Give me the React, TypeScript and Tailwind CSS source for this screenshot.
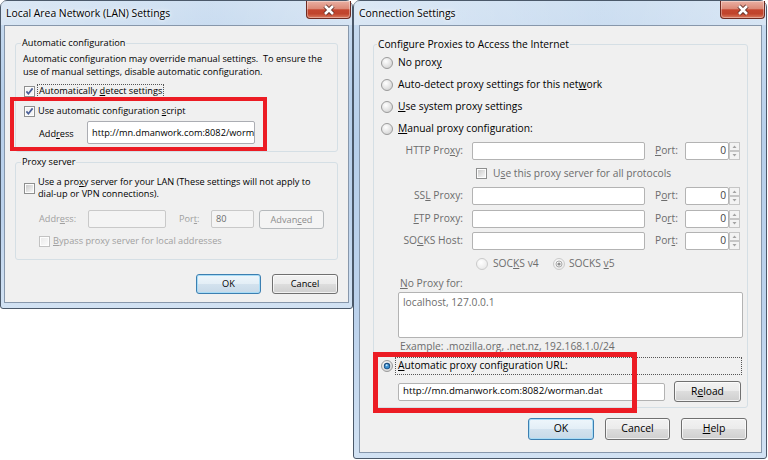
import React, { useId } from 'react';

const safeId = (id: string) => 'g' + id.replace(/[^a-zA-Z0-9]/g, '');

function CheckBox({ checked = false, disabled = false }: { checked?: boolean; disabled?: boolean }) {
  const id = safeId(useId());
  return (
    <svg width="11" height="11" viewBox="0 0 11 11" className="shrink-0">
      <defs>
        <linearGradient id={id} x1="0" y1="0" x2="1" y2="1">
          <stop offset="0" stopColor={disabled ? '#eaeaea' : '#cbcbcb'} />
          <stop offset="1" stopColor={disabled ? '#fafafa' : '#f7f7f7'} />
        </linearGradient>
      </defs>
      <rect x="0.5" y="0.5" width="10" height="10" fill="#fdfdfd" stroke={disabled ? '#c2c2c2' : '#8e8f8f'} />
      <rect x="2" y="2" width="7" height="7" fill={checked ? '#f4f4f4' : `url(#${id})`} />
      {checked && <path d="M2.4 5.4 L4.4 7.7 L8.6 2.4" fill="none" stroke="#4a5f97" strokeWidth="1.7" />}
    </svg>
  );
}

function Radio({ checked = false, disabled = false }: { checked?: boolean; disabled?: boolean }) {
  const id = safeId(useId());
  return (
    <svg width="12" height="12" viewBox="0 0 12 12" className="shrink-0">
      <defs>
        <radialGradient id={id} cx="0.4" cy="0.35" r="0.75">
          <stop offset="0" stopColor="#ffffff" />
          <stop offset="1" stopColor={disabled ? '#e6e6e6' : '#cfcfcf'} />
        </radialGradient>
      </defs>
      <circle cx="6" cy="6" r="5.5" fill={`url(#${id})`} stroke={disabled ? '#cacaca' : '#9b9b9b'} />
      {checked && disabled && (
        <>
          <circle cx="6" cy="6" r="3" fill="none" stroke="#a9a9a9" strokeWidth="1" />
          <circle cx="6" cy="6" r="1.6" fill="#8e8e8e" />
        </>
      )}
      {checked && !disabled && (
        <>
          <circle cx="6" cy="6" r="3.2" fill="#1d4f80" />
          <circle cx="6" cy="6.3" r="2.2" fill="#3b8fd0" />
          <circle cx="5.6" cy="5.3" r="1" fill="#bfe3fb" />
        </>
      )}
    </svg>
  );
}

function Spinner() {
  return (
    <svg width="11" height="18" viewBox="0 0 11 18" className="shrink-0">
      <rect x="0.5" y="0.5" width="10" height="8" fill="#f3f3f3" stroke="#c6c6c6" />
      <rect x="0.5" y="9.5" width="10" height="8" fill="#f3f3f3" stroke="#c6c6c6" />
      <path d="M3.5 6 L5.5 3.5 L7.5 6 Z" fill="#a3a3a3" />
      <path d="M3.5 12 L5.5 14.5 L7.5 12 Z" fill="#a3a3a3" />
    </svg>
  );
}

function CloseButton() {
  return (
    <div className="ml-auto mr-[1px] w-[45px] h-[18px] shrink-0 flex items-center justify-center rounded-b-[4px] border border-t-0 border-[#6e2a21] bg-[linear-gradient(180deg,#eab0a3,#dc8a78_45%,#c4462f_52%,#c0442c_75%,#da7a5e)] shadow-[inset_0_0_0_1px_rgba(255,255,255,0.35)]">
      <svg width="14" height="12" viewBox="0 0 14 12">
        <path d="M3 2 L11 10 M11 2 L3 10" stroke="#5b2b24" strokeWidth="4.4" />
        <path d="M3 2 L11 10 M11 2 L3 10" stroke="#ffffff" strokeWidth="2.6" />
      </svg>
    </div>
  );
}

function Frame({ title, className, children }: { title: string; className: string; children: React.ReactNode }) {
  return (
    <div className={`flex flex-col shrink-0 border border-[#4b596a] rounded-t-[7px] rounded-b-[3px] bg-[linear-gradient(180deg,#c9dcf0,#b7cfea_30%,#bcd2ec_70%,#d2e2f3)] ${className}`}>
      <div className="h-[24px] flex items-start bg-[linear-gradient(90deg,rgba(255,255,255,0.35),rgba(255,255,255,0.1)_60%,rgba(255,255,255,0.3))]">
        <span className="mt-[4px] ml-[5px] text-[10.4px] leading-[16px] [text-shadow:0_0_6px_#fff,0_0_3px_#fff]">{title}</span>
        <CloseButton />
      </div>
      {children}
    </div>
  );
}

function Btn({ children, kind = 'normal', className }: { children: React.ReactNode; kind?: 'normal' | 'default' | 'disabled'; className: string }) {
  const look =
    kind === 'default'
      ? 'border-[#3c7fb1] bg-[linear-gradient(180deg,#eef6fb,#e3eef6_50%,#d3e2ee_50%,#c7d9e8)] shadow-[inset_0_0_0_1px_#a8dcf6] text-black'
      : kind === 'disabled'
      ? 'border-[#b5b9bc] bg-[#f4f4f4] text-[#8d8d8d]'
      : 'border-[#707070] bg-[linear-gradient(180deg,#f2f2f2,#ebebeb_50%,#dddddd_50%,#cfcfcf)] shadow-[inset_0_0_0_1px_rgba(255,255,255,0.7)] text-black';
  return <div className={`flex items-center justify-center shrink-0 rounded-[3px] border ${look} ${className}`}>{children}</div>;
}

function Box({ children, className }: { children?: React.ReactNode; className: string }) {
  return <div className={`flex items-center shrink-0 overflow-hidden whitespace-nowrap rounded-[2px] border ${className}`}>{children}</div>;
}

const Legend = ({ children, className }: { children: React.ReactNode; className: string }) => (
  <legend className={`px-[1px] leading-[12px] ${className}`}>{children}</legend>
);

function LanDialog() {
  return (
    <Frame title="Local Area Network (LAN) Settings" className="w-[353px] h-[309px]">
      <div className="mx-[3px] mb-[5px] flex-1 border border-[#8797ab] bg-[#f0f0f0] flex flex-col px-[10px] pt-[11px] text-[9.2px]">
        <fieldset className="border border-[#d5dfe5] rounded-[3px] flex flex-col pb-[7px]">
          <Legend className="ml-[5px]">Automatic configuration</Legend>
          <p className="mt-[3px] pl-[7px] leading-[13px] whitespace-nowrap">
            Automatic configuration may override manual settings.&nbsp; To ensure the
            <br />
            use of manual settings, disable automatic configuration.
          </p>
          <div className="mt-[6px] h-[14px] pl-[8px] flex items-center gap-[2px]">
            <CheckBox checked />
            <span className="border border-dotted border-[#555] h-[14px] leading-[12px] pl-[1px] pr-[1px]">
              Automatically <u>d</u>etect settings
            </span>
          </div>
          <div className="mt-[6px] h-[14px] pl-[8px] flex items-center gap-[3px] leading-[12px]">
            <CheckBox checked />
            <span>
              Use automatic configuration <u>s</u>cript
            </span>
          </div>
          <div className="mt-[3px] h-[23px] pl-[23px] flex items-center">
            <span className="w-[48px] pt-[2px]">
              Add<u>r</u>ess
            </span>
            <Box className="w-[168px] h-[23px] bg-white border-[#abadb3] pl-[4px]">http://mn.dmanwork.com:8082/worman.dat</Box>
          </div>
        </fieldset>

        <fieldset className="mt-[4px] border border-[#d5dfe5] rounded-[3px] flex flex-col pb-[12px]">
          <Legend className="ml-[5px]">Proxy server</Legend>
          <div className="mt-[8px] pl-[8px] flex items-center gap-[3px]">
            <CheckBox />
            <span className="leading-[12px] whitespace-nowrap">
              Use a pro<u>x</u>y server for your LAN (These settings will not apply to
              <br />
              dial-up or VPN connections).
            </span>
          </div>
          <div className="mt-[9px] h-[20px] pl-[23px] flex items-center text-[#a0a0a0]">
            <span className="w-[49px]">
              Addr<u>e</u>ss:
            </span>
            <Box className="w-[78px] h-[18px] bg-[#f4f4f4] border-[#c9c9c9]" />
            <span className="ml-[13px] w-[32px]">
              Por<u>t</u>:
            </span>
            <Box className="w-[43px] h-[18px] bg-[#f4f4f4] border-[#c9c9c9] pl-[4px] text-[#6d6d6d]">80</Box>
            <Btn kind="disabled" className="ml-[5px] w-[65px] h-[19px] mt-[1px]">
              Advan<u>c</u>ed
            </Btn>
          </div>
          <div className="mt-[6px] h-[12px] pl-[23px] flex items-center gap-[3px] text-[#a0a0a0]">
            <CheckBox disabled />
            <span>
              <u>B</u>ypass proxy server for local addresses
            </span>
          </div>
        </fieldset>

        <div className="mt-[14px] flex justify-end gap-[11px]">
          <Btn kind="default" className="w-[65px] h-[20px]">OK</Btn>
          <Btn className="w-[66px] h-[20px]">Cancel</Btn>
        </div>
      </div>
    </Frame>
  );
}

function ProxyRow({ label, portLabel, h }: { label: React.ReactNode; portLabel: React.ReactNode; h: string }) {
  return (
    <div className={`flex items-center text-[#6d6d6d] ${h}`}>
      <span className="w-[89px] text-right">{label}</span>
      <Box className="ml-[9px] w-[173px] h-[18px] bg-white border-[#b3b3b3]" />
      <span className="ml-[10px] w-[30px]">{portLabel}</span>
      <Box className="w-[44px] h-[18px] bg-white border-[#b3b3b3] justify-end pr-[2px] text-[#444]">0</Box>
      <Spinner />
    </div>
  );
}

function ConnDialog() {
  return (
    <Frame title="Connection Settings" className="w-[414px] h-[459px]">
      <div className="ml-[5px] mr-[4px] mb-[5px] flex-1 border border-[#8797ab] bg-[#f0f0f0] flex flex-col px-[13px] pt-[12px] text-[10.25px]">
        <fieldset className="border border-[#d5dfe5] rounded-[3px] flex flex-col pb-[4px]">
          <Legend className="ml-[3px]">Configure Proxies to Access the Internet</Legend>
          <div className="mt-[2px] h-[22px] pl-[7px] flex items-center gap-[5px]">
            <Radio />
            <span>
              No prox<u>y</u>
            </span>
          </div>
          <div className="h-[22px] pl-[7px] flex items-center gap-[5px]">
            <Radio />
            <span>
              Auto-detect proxy settings for this net<u>w</u>ork
            </span>
          </div>
          <div className="h-[22px] pl-[7px] flex items-center gap-[5px]">
            <Radio />
            <span>
              <u>U</u>se system proxy settings
            </span>
          </div>
          <div className="h-[22px] pl-[7px] flex items-center gap-[5px]">
            <Radio />
            <span>
              <u>M</u>anual proxy configuration:
            </span>
          </div>
          <ProxyRow
            h="h-[22px]"
            label={
              <>
                HTTP Pro<u>x</u>y:
              </>
            }
            portLabel={
              <>
                <u>P</u>ort:
              </>
            }
          />
          <div className="h-[23px] pl-[102px] flex items-center gap-[6px] text-[#6d6d6d]">
            <CheckBox />
            <span>
              U<u>s</u>e this proxy server for all protocols
            </span>
          </div>
          <ProxyRow
            h="h-[22px]"
            label={
              <>
                SS<u>L</u> Proxy:
              </>
            }
            portLabel={
              <>
                P<u>o</u>rt:
              </>
            }
          />
          <ProxyRow
            h="h-[23px]"
            label={
              <>
                <u>F</u>TP Proxy:
              </>
            }
            portLabel={
              <>
                Po<u>r</u>t:
              </>
            }
          />
          <ProxyRow
            h="h-[22px]"
            label={
              <>
                SO<u>C</u>KS Host:
              </>
            }
            portLabel={
              <>
                Por<u>t</u>:
              </>
            }
          />
          <div className="h-[23px] pl-[102px] flex items-center text-[#6d6d6d]">
            <Radio disabled />
            <span className="ml-[5px] w-[60px]">
              SOC<u>K</u>S v4
            </span>
            <Radio checked disabled />
            <span className="ml-[4px]">
              SOCKS <u>v</u>5
            </span>
          </div>
          <div className="h-[17px] pl-[26px] flex items-center text-[#6d6d6d]">
            <span>
              <u>N</u>o Proxy for:
            </span>
          </div>
          <div className="ml-[24px] w-[345px] h-[46px] bg-white border border-[#b3b3b3] rounded-[2px] px-[4px] pt-[2px] text-[#6d6d6d] leading-[14px]">
            localhost, 127.0.0.1
          </div>
          <div className="mt-[2px] h-[14px] pl-[26px] flex items-center text-[#6d6d6d]">
            Example: .mozilla.org, .net.nz, 192.168.1.0/24
          </div>
          <div className="mt-[3px] h-[18px] pl-[7px] pr-[5px] flex items-center gap-[2px]">
            <Radio checked />
            <span className="flex-1 h-[18px] flex items-center pl-[2px] border border-dotted border-[#555]">
              <u>A</u>utomatic proxy configuration URL:
            </span>
          </div>
          <div className="mt-[5px] h-[23px] pl-[24px] flex items-center">
            <Box className="w-[267px] h-[18px] bg-white border-[#b3b3b3] pl-[4px] text-[9.7px]">http://mn.dmanwork.com:8082/worman.dat</Box>
            <Btn className="ml-[9px] w-[67px] h-[21px]">
              R<u>e</u>load
            </Btn>
          </div>
        </fieldset>

        <div className="mt-[10px] flex justify-end gap-[11px] pr-[1px]">
          <Btn kind="default" className="w-[66px] h-[22px] text-[10.5px]">OK</Btn>
          <Btn className="w-[65px] h-[22px] text-[10.5px]">Cancel</Btn>
          <Btn className="w-[66px] h-[22px] text-[10.5px]">
            <u>H</u>elp
          </Btn>
        </div>
      </div>
    </Frame>
  );
}

export default function App() {
  return (
    <div className="relative w-[768px] h-[460px] overflow-hidden bg-white flex items-start font-['Open_Sans',sans-serif] text-black">
      <LanDialog />
      <ConnDialog />
      <div className="absolute left-[10px] top-[97px] w-[257px] h-[54px] border-4 border-[#ec1c24]" />
      <div className="absolute left-[373px] top-[352px] w-[264px] h-[61px] border-[5px] border-[#ec1c24]" />
    </div>
  );
}
